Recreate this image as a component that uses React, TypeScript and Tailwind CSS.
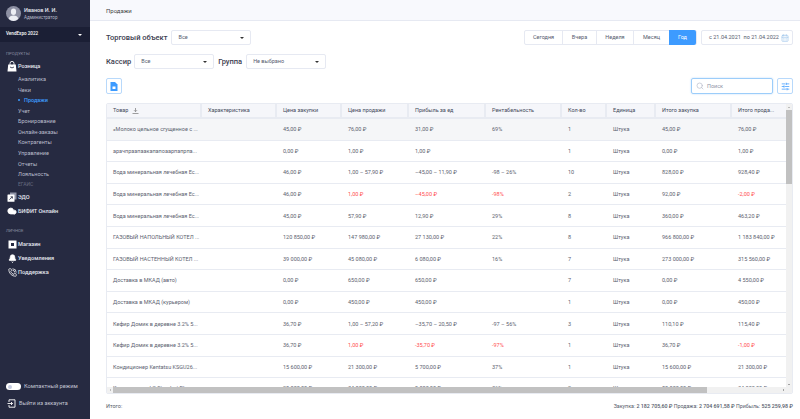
import React from 'react';
import { Search, SlidersHorizontal, CalendarDays, Bell, PhoneCall, Cloud } from 'lucide-react';

const COLS = ['w-[95px]', 'w-[75px]', 'w-[65px]', 'w-[67px]', 'w-[77px]', 'w-[76px]', 'w-[45px]', 'w-[49px]', 'w-[76px]', 'w-[56px]'];

const HEADERS = ['Товар', 'Характеристика', 'Цена закупки', 'Цена продажи', 'Прибыль за ед', 'Рентабельность', 'Кол-во', 'Единица', 'Итого закупка', 'Итого прода...'];

type Row = { cells: string[]; red?: number[]; bg?: boolean };

const ROWS: Row[] = [
  { cells: ['«Молоко цельное сгущенное с ...', '', '45,00 ₽', '76,00 ₽', '31,00 ₽', '69%', '1', 'Штука', '45,00 ₽', '76,00 ₽'], bg: true },
  { cells: ['арачпраапаакапапоаарпапрпа...', '', '0,00 ₽', '1,00 ₽', '1,00 ₽', '', '1', 'Штука', '0,00 ₽', '1,00 ₽'] },
  { cells: ['Вода минеральная лечебная Ес...', '', '46,00 ₽', '1,00 – 57,90 ₽', '–45,00 – 11,90 ₽', '-98 – 26%', '10', 'Штука', '828,00 ₽', '928,40 ₽'] },
  { cells: ['Вода минеральная лечебная Ес...', '', '46,00 ₽', '1,00 ₽', '–45,00 ₽', '-98%', '2', 'Штука', '92,00 ₽', '-2,00 ₽'], red: [3, 4, 5, 9] },
  { cells: ['Вода минеральная лечебная Ес...', '', '45,00 ₽', '57,90 ₽', '12,90 ₽', '29%', '8', 'Штука', '360,00 ₽', '463,20 ₽'] },
  { cells: ['ГАЗОВЫЙ НАПОЛЬНЫЙ КОТЕЛ ...', '', '120 850,00 ₽', '147 980,00 ₽', '27 130,00 ₽', '22%', '8', 'Штука', '966 800,00 ₽', '1 183 840,00 ₽'] },
  { cells: ['ГАЗОВЫЙ НАСТЕННЫЙ КОТЕЛ ...', '', '39 000,00 ₽', '45 080,00 ₽', '6 080,00 ₽', '16%', '7', 'Штука', '273 000,00 ₽', '315 560,00 ₽'] },
  { cells: ['Доставка в МКАД (авто)', '', '0,00 ₽', '650,00 ₽', '650,00 ₽', '', '7', 'Штука', '0,00 ₽', '4 550,00 ₽'] },
  { cells: ['Доставка в МКАД (курьером)', '', '0,00 ₽', '450,00 ₽', '450,00 ₽', '', '1', 'Штука', '0,00 ₽', '450,00 ₽'] },
  { cells: ['Кефир Домик в деревне 3.2% 5...', '', '36,70 ₽', '1,00 – 57,20 ₽', '–35,70 – 20,50 ₽', '-97 – 56%', '3', 'Штука', '110,10 ₽', '115,40 ₽'] },
  { cells: ['Кефир Домик в деревне 3.2% 5...', '', '36,70 ₽', '1,00 ₽', '-35,70 ₽', '-97%', '1', 'Штука', '36,70 ₽', '-1,00 ₽'], red: [3, 4, 5, 9] },
  { cells: ['Кондиционер Kentatsu KSGU26...', '', '15 600,00 ₽', '21 300,00 ₽', '5 700,00 ₽', '37%', '1', 'Штука', '15 600,00 ₽', '21 300,00 ₽'] },
  { cells: ['Кондиционер LG Standart Plus', '', '25 000,00 ₽', '34 000,00 ₽', '9 000,00 ₽', '36%', '2', 'Штука', '50 000,00 ₽', '34 000,00 ₽'] },
];

const SUB_ITEMS = ['Аналитика', 'Чеки', 'Продажи', 'Учет', 'Бронирование', 'Онлайн-заказы', 'Контрагенты', 'Управление', 'Отчеты', 'Лояльность'];

const BagIcon = () => (
  <svg width="10" height="11" viewBox="0 0 10 11">
    <path d="M1.2 3.5h7.6l.7 7H.5z" fill="white" />
    <path d="M3 4V2.4a2 2 0 0 1 4 0V4" fill="none" stroke="white" strokeWidth="0.9" />
    <path d="M3 6q2 1.8 4 0" fill="none" stroke="#262a41" strokeWidth="0.8" />
  </svg>
);

const DocsIcon = () => (
  <svg width="10" height="10" viewBox="0 0 10 10">
    <rect x="3" y="0.5" width="6.5" height="7" fill="#8f93a6" />
    <rect x="0.5" y="2.5" width="7" height="7.2" rx="0.5" fill="white" />
    <path d="M2.4 7.6 5.4 4.8M3.6 4.8h1.8v1.8" fill="none" stroke="#262a41" strokeWidth="0.8" />
  </svg>
);

const ShopIcon = () => (
  <svg width="9" height="9" viewBox="0 0 9 9">
    <rect x="0.5" y="0.5" width="8" height="8" fill="white" />
    <rect x="3" y="3" width="3" height="3" fill="#262a41" />
  </svg>
);

const ExitIcon = () => (
  <svg width="9" height="9" viewBox="0 0 9 9" fill="none" stroke="white" strokeWidth="0.9">
    <path d="M2 3V.8h6v7.4H2V6" />
    <path d="M.5 4.5h5M4 3l1.5 1.5L4 6" />
  </svg>
);

const AvatarIcon = () => (
  <svg width="15" height="15" viewBox="0 0 15 15">
    <circle cx="7.5" cy="7.5" r="7.5" fill="#8d90a3" />
    <ellipse cx="7.5" cy="5.8" rx="2.6" ry="3.3" fill="#eceef4" />
    <path d="M2.8 13c.3-2.6 2.4-3.4 4.7-3.4s4.400.8 4.700 3.400A7.500 7.500 0 0 1 2.800 13z" fill="#eceef4" />
  </svg>
);

const SortIcon = () => (
  <svg width="7" height="6" viewBox="0 0 7 6" fill="none" stroke="#777" strokeWidth="0.7">
    <path d="M3.500 0v3.500M2 2.200 3.500 3.700 5 2.200M0.500 5.500h6" />
  </svg>
);

const Select: React.FC<{ label: string }> = ({ label }) => (
  <div className="w-[80px] h-[15px] flex items-center justify-between pl-[6px] pr-[6px] bg-white border border-[#e6e9f2] rounded-[2px] text-[5.5px] text-[#555b6e]">
    <span>{label}</span>
    <span className="w-0 h-0 border-x-[2px] border-x-transparent border-t-[2px] border-t-[#333]" />
  </div>
);

const NavMain: React.FC<{ icon: React.ReactNode; label: string; className?: string }> = ({ icon, label, className }) => (
  <div className={`flex items-center gap-[1px] pl-[7px] ${className ?? ''}`}>
    <span className="w-[10px] flex justify-center text-white">{icon}</span>
    <span className="text-[5.6px] font-medium text-[#e4e6ef]">{label}</span>
  </div>
);

export default function App() {
  return (
    <div className="w-[800px] h-[419px] flex overflow-hidden bg-white text-[#3f4454] font-['Roboto',sans-serif]">
      {/* Sidebar */}
      <aside className="w-[90px] shrink-0 bg-[#262a41] flex flex-col">
        <div className="h-[27px] flex items-center gap-[3px] pl-[6px]">
          <AvatarIcon />
          <div className="leading-[7px]">
            <div className="text-[5.5px] font-medium text-[#e4e6ef]">Иванов И. И.</div>
            <div className="text-[4.5px] text-[#b4b7c6]">Администратор</div>
          </div>
        </div>
        <div className="h-[15px] bg-[#1b1f35] flex items-center justify-between pl-[6px] pr-[8px] text-[4.6px] font-medium text-white">
          <span>VendExpo 2022</span>
          <span className="w-0 h-0 border-x-[2px] border-x-transparent border-t-[2px] border-t-white" />
        </div>
        <div className="mt-[9px] pl-[6px] text-[4.3px] text-[#8a8ea3] leading-[6px]">ПРОДУКТЫ</div>
        <div className="mt-[4px]"><NavMain icon={<BagIcon />} label="Розница" /></div>
        <div className="mt-[2px] flex flex-col">
          {SUB_ITEMS.map((item) => (
            <div key={item} className={`h-[10.55px] flex items-center pl-[18px] text-[5.5px] ${item === 'Продажи' ? 'text-[#3d9bff] font-medium' : 'text-[#b9bccb]'}`}>
              {item === 'Продажи' && <span className="w-[2px] h-[2px] rounded-full bg-[#3d9bff] mr-[4px]" />}
              {item}
            </div>
          ))}
          <div className="h-[10.55px] flex items-center pl-[18px] text-[5px] text-[#666a80]">ЕГАИС</div>
        </div>
        <NavMain className="mt-[2px]" icon={<DocsIcon />} label="ЭДО" />
        <NavMain className="mt-[4px]" icon={<Cloud size={10} fill="white" className="text-white" />} label="БИФИТ Онлайн" />
        <div className="mt-[12px] pl-[6px] text-[4.3px] text-[#8a8ea3] leading-[6px]">ЛИЧНОЕ</div>
        <NavMain className="mt-[6px]" icon={<ShopIcon />} label="Магазин" />
        <NavMain className="mt-[5px]" icon={<Bell size={9} fill="white" className="text-white" />} label="Уведомления" />
        <NavMain className="mt-[5px]" icon={<PhoneCall size={9} className="text-white" />} label="Поддержка" />
        <div className="mt-auto flex items-center gap-[3px] pl-[6px]">
          <div className="w-[15px] h-[7px] rounded-full bg-white flex items-center pl-[2px]">
            <span className="w-[4px] h-[4px] rounded-full bg-[#c5cbe0]" />
          </div>
          <span className="text-[5.7px] text-[#c4c7d4]">Компактный режим</span>
        </div>
        <div className="mt-[8px] mb-[11px] flex items-center gap-[3px] pl-[7px]">
          <ExitIcon />
          <span className="text-[5.5px] text-[#c4c7d4]">Выйти из аккаунта</span>
        </div>
      </aside>

      {/* Main */}
      <main className="flex-1 min-w-0 flex flex-col">
        <div className="h-[21px] shrink-0 bg-[#f8f9fd] border-b border-[#e6e9f2] flex items-center pl-[16px] text-[6px] text-[#444]">Продажи</div>

        <div className="pl-[16px] pr-[7px] flex-1 min-h-0 flex flex-col">
          <div className="mt-[9px] flex items-center justify-between h-[15px]">
            <div className="flex items-center gap-[4px]">
              <span className="text-[7.5px] font-medium text-[#3c4050]">Торговый объект</span>
              <Select label="Все" />
            </div>
            <div className="flex items-center gap-[4px]">
              <div className="flex h-[15px] bg-white border border-[#e6e9f2] rounded-[2px] text-[5.5px] text-[#555b6e]">
                <div className="w-[38px] flex items-center justify-center border-r border-[#e6e9f2]">Сегодня</div>
                <div className="w-[34px] flex items-center justify-center border-r border-[#e6e9f2]">Вчера</div>
                <div className="w-[37px] flex items-center justify-center border-r border-[#e6e9f2]">Неделя</div>
                <div className="w-[35px] flex items-center justify-center">Месяц</div>
                <div className="w-[27px] flex items-center justify-center bg-[#3d9bff] text-white rounded-r-[2px] -my-px">Год</div>
              </div>
              <div className="w-[92px] h-[15px] flex items-center justify-between pl-[7px] pr-[3px] bg-white border border-[#e6e9f2] rounded-[2px] text-[5.5px] text-[#555b6e]">
                <span>с 21.04.2021&nbsp; по 21.04.2022</span>
                <CalendarDays size={8} className="text-[#9fc6ec]" />
              </div>
            </div>
          </div>

          <div className="mt-[9px] flex items-center h-[15px]">
            <span className="text-[7.5px] font-medium text-[#3c4050] mr-[3px]">Кассир</span>
            <Select label="Все" />
            <span className="text-[7.5px] font-medium text-[#3c4050] ml-[4px] mr-[4px]">Группа</span>
            <Select label="Не выбрано" />
          </div>

          <div className="mt-[9px] flex items-center justify-between h-[16px]">
            <div className="w-[16px] h-[16px] border border-[#b8d9fb] rounded-[2px] flex items-center justify-center">
              <svg width="8" height="9" viewBox="0 0 8 9">
                <path d="M.5 0H5l2.500 2.500V9H.5z" fill="#3d9bff" />
                <rect x="2.500" y="4.500" width="3" height="2.500" fill="white" />
              </svg>
            </div>
            <div className="flex items-center gap-[4px]">
              <div className="w-[82px] h-[16px] flex items-center gap-[3px] pl-[4px] border border-[#9ccdfa] rounded-[2px] shadow-[0_0_2px_#b8d9fb] text-[5.5px] text-[#8e94a6]">
                <Search size={8} className="text-[#b5bac8]" />
                <span>Поиск</span>
              </div>
              <div className="w-[16px] h-[16px] border border-[#b8d9fb] rounded-[2px] flex items-center justify-center">
                <SlidersHorizontal size={9} className="text-[#3d9bff]" />
              </div>
            </div>
          </div>

          {/* Table */}
          <div className="mt-[9px] h-[291px] shrink-0 border border-[#e8ebf2] rounded-[2px] flex flex-col overflow-hidden">
            <div className="flex-1 min-h-0 flex">
              <div className="flex-1 min-w-0 overflow-hidden">
                <div className="flex h-[15px] bg-[#f5f6fa] border-b-2 border-[#e8ebf2] text-[5.5px] text-[#444a5a] whitespace-nowrap">
                  {HEADERS.map((h, i) => (
                    <div key={h} className={`${COLS[i]} shrink-0 flex items-center gap-[4px] pl-[6px] ${i < 9 ? 'border-r-2 border-[#e8ebf2]' : ''}`}>
                      {h}
                      {i === 0 && <SortIcon />}
                    </div>
                  ))}
                </div>
                {ROWS.map((row, r) => (
                  <div key={r} className={`flex h-[21.6px] border-b border-[#e8ebf2] text-[5.5px] text-[#5c6270] whitespace-nowrap ${row.bg ? 'bg-[#f5f6f8]' : 'bg-white'}`}>
                    {row.cells.map((c, i) => (
                      <div key={i} className={`${COLS[i]} shrink-0 flex items-center pl-[6px] ${row.red?.includes(i) ? 'text-[#ff4d4f]' : ''}`}>{c}</div>
                    ))}
                  </div>
                ))}
              </div>
              {/* vertical scrollbar */}
              <div className="w-[6px] shrink-0 bg-[#f1f1f1] flex flex-col items-center">
                <div className="h-[6px] flex items-center"><span className="w-0 h-0 border-x-[1.5px] border-x-transparent border-b-[1.5px] border-b-[#888]" /></div>
                <div className="w-full h-[74px] bg-[#c1c1c1]" />
                <div className="h-[6px] mt-auto flex items-center"><span className="w-0 h-0 border-x-[1.5px] border-x-transparent border-t-[1.5px] border-t-[#555]" /></div>
              </div>
            </div>
            {/* horizontal scrollbar */}
            <div className="h-[6px] shrink-0 bg-[#f1f1f1] flex items-center">
              <div className="w-[6px] flex justify-center"><span className="w-0 h-0 border-y-[1.5px] border-y-transparent border-r-[1.5px] border-r-[#888]" /></div>
              <div className="w-[594px] h-full bg-[#c1c1c1]" />
              <div className="w-[6px] ml-auto mr-[6px] flex justify-center"><span className="w-0 h-0 border-y-[1.5px] border-y-transparent border-l-[1.5px] border-l-[#555]" /></div>
            </div>
          </div>

          <div className="flex-1 flex items-center justify-between text-[5.3px] text-[#555b6a]">
            <span className="text-[5.5px]">Итого:</span>
            <span>Закупка: <b className="font-medium">2 182 705,60 ₽</b> Продажа: <b className="font-medium">2 704 691,58 ₽</b> Прибыль: <b className="font-medium">525 259,98 ₽</b></span>
          </div>
        </div>
      </main>
    </div>
  );
}
